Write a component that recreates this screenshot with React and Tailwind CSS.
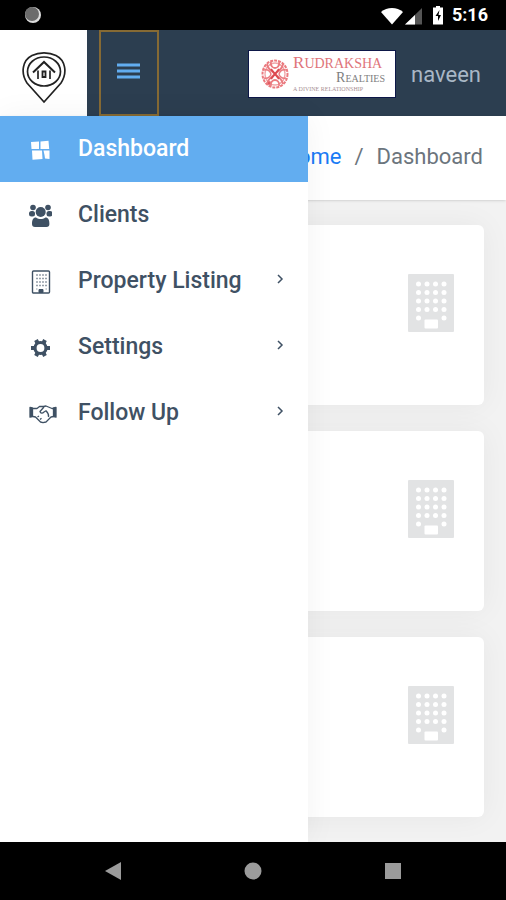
import { useState } from 'react';

const menu = [
    { label: 'Dashboard', icon: DashboardIcon },
    { label: 'Clients', icon: ClientsIcon },
    { label: 'Property Listing', icon: BuildingOutlineIcon, sub: true },
    { label: 'Settings', icon: GearIcon, sub: true },
    { label: 'Follow Up', icon: HandshakeIcon, sub: true },
];

const cards = ['properties', 'clients', 'followups'];

function DashboardIcon() {
    return (
        <svg className="h-6 w-6" viewBox="0 0 24 24" fill="currentColor" aria-hidden="true">
            <path d="M3 4 11 3.500v7.500H3.500ZM12.500 3.500l8-.8.7 8.300h-8.700ZM4 12.500h10l.5 8.500L4.500 21.700ZM15.500 12.500h6v8.500l-4.500-.5-.5-3.500Z" />
        </svg>
    );
}

function ClientsIcon() {
    return (
        <svg className="h-6 w-6" viewBox="0 0 24 24" fill="currentColor" aria-hidden="true">
            <circle cx="5" cy="3.5" r="2.8" />
            <circle cx="20" cy="3.5" r="2.8" />
            <rect x="1" y="7" width="6" height="5.5" rx="2.5" />
            <rect x="18.500" y="7" width="6" height="5.5" rx="2.5" />
            <circle cx="12.7" cy="8" r="5" />
            <path d="M4 20c0-4 1-6.5 4-6.5 1.500 1 3 1.500 4.700 1.500s3.200-.5 4.700-1.500c3 0 4 2.500 4 6.500 0 2-1 3-3 3H7c-2 0-3-1-3-3Z" />
        </svg>
    );
}

function BuildingOutlineIcon() {
    return (
        <svg className="h-6 w-6" viewBox="0 0 24 24" fill="none" stroke="currentColor" aria-hidden="true">
            <rect x="4.500" y="1" width="17" height="22" rx="1" strokeWidth="1.400" />
            <path d="M8 5h11M8 8.500h11M8 12h11M8 15.500h11" strokeWidth="1.500" strokeDasharray="2 1" opacity=".55" />
            <path d="M11 19.500h4v3h-4Z" fill="currentColor" />
            <path d="M8 19h1.500M17.500 19H19" opacity=".55" />
        </svg>
    );
}

function GearIcon() {
    return (
        <svg className="h-6 w-6" viewBox="0 0 24 24" fill="none" stroke="currentColor" aria-hidden="true">
            <circle cx="12.500" cy="12" r="5.500" strokeWidth="3.200" />
            <path d="M8 4 9.500 7M17 4l-1.500 3M3 12h3.500M18.500 12H22M8 20l1.500-3M17 20l-1.500-3" strokeWidth="4" />
        </svg>
    );
}

function HandshakeIcon() {
    return (
        <svg className="h-6 w-[30px]" viewBox="0 0 28 24" fill="none" stroke="currentColor" strokeWidth="1.300" strokeLinejoin="round" aria-hidden="true">
            <path d="M1 5.500 3.500 6v8.500L1 15ZM27 5.500 24.500 6v8.500l2.500.5Z" fill="currentColor" />
            <path d="M4 6.500h4l2.500-2h4l2.500-.5 6 2.500h1.500M4 14.500l2.500.5 5 5 2.500.7 3-.7 5-5 2.500-.5M15 5l-4 4.500c.5 2 2.500 2 4 .5l2-1.200c2 2 3 4 2.500 6.200" />
            <path d="m8.500 15 1.500-1M11 17.500l1.500-1.300" />
        </svg>
    );
}

function ChevronIcon() {
    return (
        <svg className="mb-1.5 h-3 w-2" viewBox="0 0 8 12" fill="none" stroke="currentColor" strokeWidth="1.500" aria-hidden="true">
            <path d="m2 2 4 4-4 4" />
        </svg>
    );
}

function PinLogo() {
    return (
        <svg className="h-[52px] w-11" viewBox="0 0 44 52" fill="none" stroke="#222" strokeWidth="1.700" aria-hidden="true">
            <path d="M22 50 5 31C-2 20 1 8 10 3.500c7-3.500 17-3.500 24 0 9 4.500 12 16.500 5 27.500Z" />
            <ellipse cx="22" cy="19.500" rx="16.500" ry="14.500" />
            <path d="M11 20.500 22 10l11 10.500" strokeWidth="2" />
            <path d="M16 18.500V27M28 18.500V27" strokeWidth="2" stroke="#444" />
            <path d="M20.500 19.500h3v5.500h-3Z" strokeWidth="1.800" />
        </svg>
    );
}

function Emblem() {
    return (
        <svg className="h-[30px] w-7 shrink-0" viewBox="0 0 28 30" fill="none" stroke="#ea7a7f" strokeWidth="1.300" aria-hidden="true">
            <ellipse cx="14" cy="15" rx="12.500" ry="13.500" strokeWidth="2" strokeDasharray="3 1" />
            <ellipse cx="14" cy="15" rx="10" ry="11" stroke="#f0a5a8" />
            <path d="M6 5c1 6 5 7 8 10-4 3-7 5-8 10M22 5c-1 6-5 7-8 10 4 3 7 5 8 10M10 3c-1 4 2 6 4 6s5-2 4-6M10 27c-1-4 2-6 4-6s5 2 4 6" strokeWidth="1.800" />
            <path d="M3 11c4-1 6 1 7 4-1 3-3 5-7 4M25 11c-4-1-6 1-7 4 1 3 3 5 7 4" />
            <path d="M10 10l8 10M18 10l-8 10" stroke="#dc4a50" strokeWidth="2" />
            <circle cx="8" cy="24" r="1.500" fill="#dc3d45" />
        </svg>
    );
}

function BuildingIcon() {
    return (
        <svg className="h-[60px] w-[46px] text-[#e2e3e4]" viewBox="0 0 46 60" aria-hidden="true">
            <rect y="1" width="46" height="58" rx="1" fill="currentColor" />
            <g fill="#fff">
                {[11, 19.5, 28, 36.5, 45].map((y, row) =>
                    [10.5, 19, 27.5, 36].map((x, col) =>
                        row === 4 && (col === 1 || col === 2) ? null : <circle key={`${x}-${y}`} cx={x} cy={y} r="2.5" />
                    )
                )}
                <rect x="16.5" y="46.5" width="13.5" height="9" rx="1" />
            </g>
        </svg>
    );
}

function StatusBar() {
    return (
        <div className="flex h-[30px] shrink-0 items-center justify-between bg-black pr-[18px] pl-6 text-white">
            <svg className="h-[18px] w-[18px]" viewBox="0 0 18 18" aria-hidden="true">
                <circle cx="9" cy="9" r="8" fill="#ddd" />
                <circle cx="8" cy="8" r="7" fill="#6b6b6b" />
            </svg>
            <div className="flex items-center gap-2">
                <svg className="h-5 w-11" viewBox="0 0 44 20" fill="#fff" aria-hidden="true">
                    <path d="M1 7C7 1.500 17 1.500 23 7L12 19.500Z" />
                    <path d="M42 3v16.500H25Z" fill="#555" />
                    <path d="M35 10v9.500H25Z" />
                </svg>
                <svg className="h-5 w-3" viewBox="0 0 12 20" aria-hidden="true">
                    <path d="M4 1h4v1.500h3V19.500H1V2.500h3Z" fill="#fff" />
                    <path d="M7.500 5 3.500 11h2.500V16l3-6H6.500Z" fill="#000" />
                </svg>
                <span className="text-lg font-bold">5:16</span>
            </div>
        </div>
    );
}

function Brand() {
    return (
        <a href="#brand" className="flex h-[46px] w-[146px] items-center gap-1 bg-white pl-3 font-['Liberation_Serif',serif] outline-1 outline-[#0d1748]">
            <Emblem />
            <span className="flex w-[92px] flex-col whitespace-nowrap">
                <span className="text-[14px] leading-4 text-[#e0747a]">
                    <span className="text-[17px]">R</span>UDRAKSHA
                </span>
                <span className="self-end text-[10px] leading-3 text-[#7e7e7e]">
                    <span className="text-[14px]">R</span>EALTIES
                </span>
                <span className="text-[6px] leading-2 text-[#a88f94]">A DIVINE RELATIONSHIP</span>
            </span>
        </a>
    );
}

function Sidebar() {
    const [active, setActive] = useState('Dashboard');

    return (
        <nav className="absolute inset-y-0 left-0 w-[308px] bg-white shadow-[0_0_30px_rgba(0,0,0,0.05)]">
            <ul>
                {menu.map(({ label, icon: Icon, sub }) => (
                    <li key={label}>
                        <button
                            type="button"
                            onClick={() => setActive(label)}
                            className={`flex h-[66px] w-full items-center pt-px pr-6 pl-7 text-[23px] font-medium ${
                                active === label ? 'bg-[#62adf0] text-white' : 'text-[#3f5164]'
                            }`}
                        >
                            <span className="flex w-[50px]">
                                <Icon />
                            </span>
                            <span className="flex-1 text-left">{label}</span>
                            {sub && <ChevronIcon />}
                        </button>
                    </li>
                ))}
            </ul>
        </nav>
    );
}

export default function App() {
    const [open, setOpen] = useState(true);

    return (
        <div className="flex min-h-screen flex-col bg-[#f2f2f2] font-[Roboto,sans-serif]">
            <StatusBar />
            <header className="flex h-[86px] shrink-0 items-stretch bg-[#2c3e50]">
                <a href="#home" aria-label="Home" className="flex w-[87px] items-center justify-center bg-white pt-2.5">
                    <PinLogo />
                </a>
                <button
                    type="button"
                    aria-label="Toggle menu"
                    onClick={() => setOpen(!open)}
                    className="ml-3 flex w-[60px] items-center justify-center border-2 border-[#866a34] pb-1"
                >
                    <svg className="h-[18px] w-6" viewBox="0 0 24 18" stroke="#62adf0" strokeWidth="3" aria-hidden="true">
                        <path d="M0 3h23M0 9h23M0 15h23" />
                    </svg>
                </button>
                <div className="ml-auto flex items-center gap-4 pt-0.5 pr-[25px]">
                    <Brand />
                    <a href="#profile" className="text-[22px] text-[#a9b7c6]">naveen</a>
                </div>
            </header>

            <div className="relative flex flex-1 flex-col">
                <div className="flex h-[84px] items-center justify-end gap-[13px] bg-white pr-[23px] pb-1 text-[22px] text-[#6c757d] shadow-sm">
                    <a href="#home" className="text-[#1a7bf5]">Home</a>
                    <span>/</span>
                    <span>Dashboard</span>
                </div>
                <main className="flex flex-col gap-[26px] px-[22px] py-[25px]">
                    {cards.map((card) => (
                        <section key={card} className="flex h-[180px] justify-end rounded-md bg-white pt-12 pr-[30px] shadow-[0_0_30px_rgba(0,0,0,0.05)]">
                            <BuildingIcon />
                        </section>
                    ))}
                </main>
                {open && <Sidebar />}
            </div>

            <footer className="flex h-[58px] shrink-0 items-center justify-center gap-[122px] bg-black text-[#9b9b9b]">
                <button type="button" aria-label="Back">
                    <svg className="h-[18px] w-[18px]" viewBox="0 0 18 18" fill="currentColor">
                        <path d="M1 9 17 0v18Z" />
                    </svg>
                </button>
                <button type="button" aria-label="Home screen">
                    <svg className="h-[18px] w-[18px]" viewBox="0 0 18 18" fill="currentColor">
                        <circle cx="9" cy="9" r="8.5" />
                    </svg>
                </button>
                <button type="button" aria-label="Recent apps">
                    <svg className="h-[18px] w-[18px]" viewBox="0 0 18 18" fill="currentColor">
                        <path d="M1 1h16v16H1Z" />
                    </svg>
                </button>
            </footer>
        </div>
    );
}
